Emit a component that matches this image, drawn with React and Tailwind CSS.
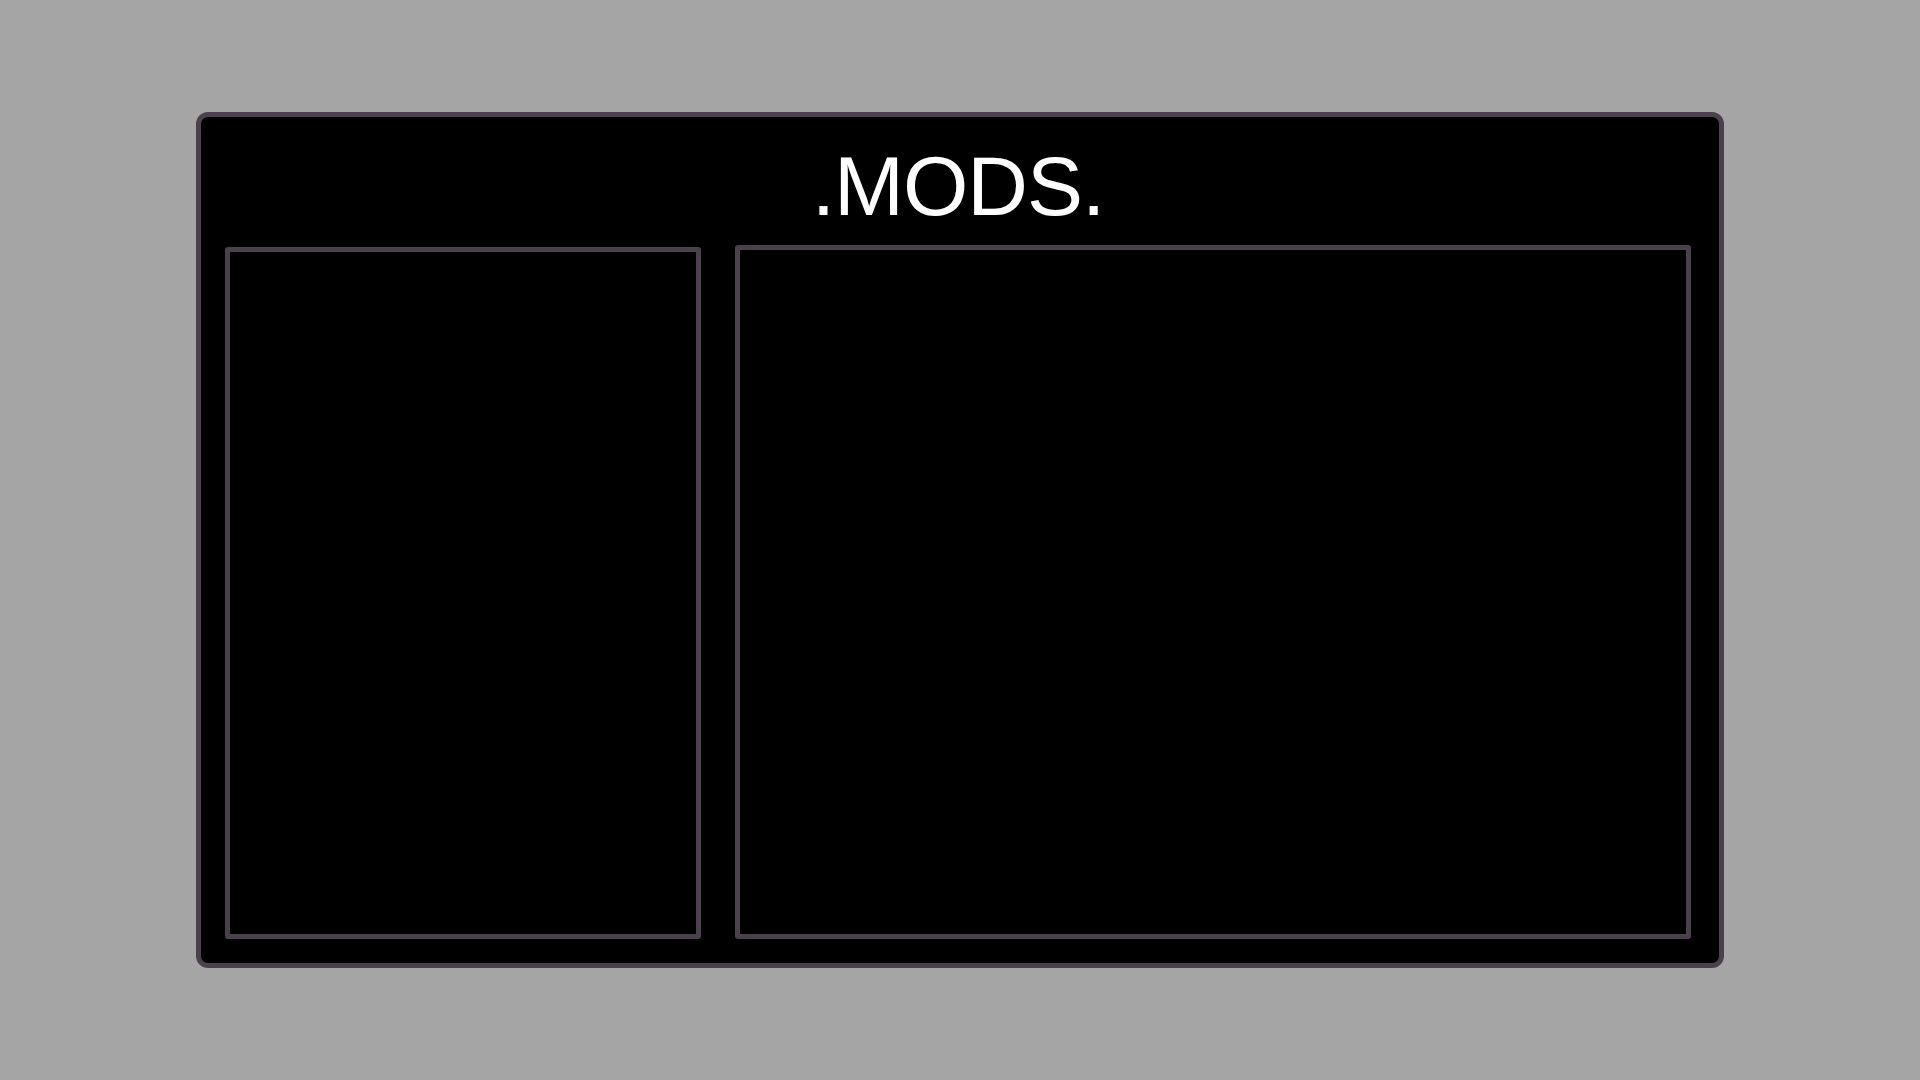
export default function App() {
  return (
    <div className="w-[1920px] h-[1080px] bg-[#a5a5a5] pt-[112px] pl-[196px]">
      <div className="w-[1528px] h-[856px] border-[5px] border-[#4b414d] rounded-[12px] bg-black flex flex-col pl-[24px] pr-[28px]">
        <div className="h-[128px] pt-[27px] text-center text-white leading-none text-[84px] tracking-[-1px] font-['Liberation_Sans',Arial,sans-serif]">
          .MODS.
        </div>
        <div className="flex flex-row gap-[34px]">
          <div className="w-[476px] h-[692px] mt-[2px] border-[5px] border-[#4b414d] rounded-[3px]" />
          <div className="w-[956px] h-[694px] border-[5px] border-[#4b414d] rounded-[3px]" />
        </div>
      </div>
    </div>
  );
}
